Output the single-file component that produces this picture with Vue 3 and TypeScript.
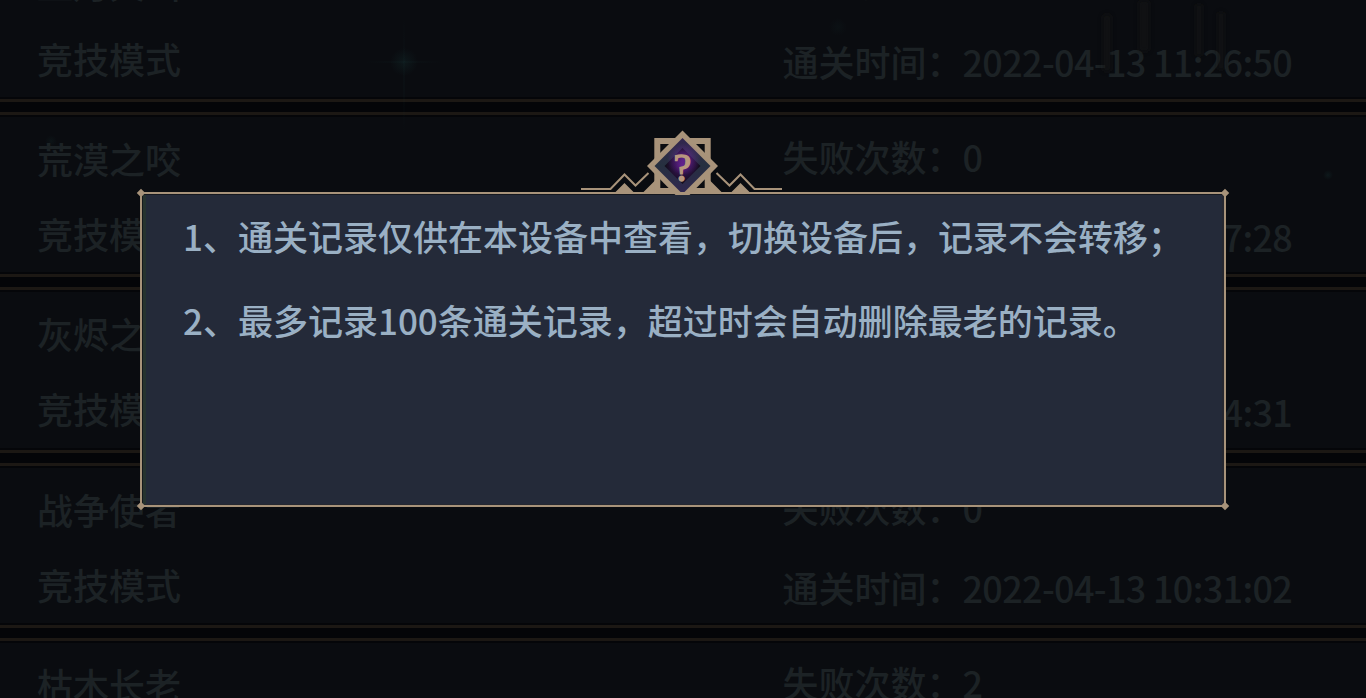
<script setup lang="ts">
interface RecordItem {
  name: string
  mode: string
  fails: number
  time: string
}

const records: RecordItem[] = [
  { name: '血月火山', mode: '竞技模式', fails: 0, time: '2022-04-13 11:26:50' },
  { name: '荒漠之咬', mode: '竞技模式', fails: 0, time: '2022-04-13 11:07:28' },
  { name: '灰烬之地', mode: '竞技模式', fails: 0, time: '2022-04-13 10:44:31' },
  { name: '战争使者', mode: '竞技模式', fails: 0, time: '2022-04-13 10:31:02' },
  { name: '枯木长老', mode: '竞技模式', fails: 2, time: '2022-04-13 10:12:45' },
]

const tips: string[] = [
  '1、通关记录仅供在本设备中查看，切换设备后，记录不会转移；',
  '2、最多记录100条通关记录，超过时会自动删除最老的记录。',
]

const corners = ['tl', 'tr', 'bl', 'br']
</script>

<template>
  <div class="screen">
    <ul class="records">
      <li v-for="item in records" :key="item.time" class="record">
        <div class="col-left">
          <span class="name">{{ item.name }}</span>
          <span class="mode">{{ item.mode }}</span>
        </div>
        <div class="col-right">
          <span class="fails">失败次数：{{ item.fails }}</span>
          <span class="time">通关时间：<span class="stamp">{{ item.time }}</span></span>
        </div>
      </li>
    </ul>

    <svg class="glow" viewBox="0 0 1366 698">
      <defs>
        <radialGradient id="spark">
          <stop offset="0" stop-color="#1c4a48" stop-opacity=".2" />
          <stop offset="1" stop-color="#1c4a48" stop-opacity="0" />
        </radialGradient>
        <filter id="soft"><feGaussianBlur stdDeviation="2" /></filter>
      </defs>
      <circle cx="404" cy="62" r="14" fill="url(#spark)" />
      <ellipse cx="404" cy="62" rx="46" ry="1" fill="url(#spark)" opacity=".6" />
      <ellipse cx="404" cy="75" rx="1" ry="70" fill="url(#spark)" opacity=".6" />
      <circle cx="51" cy="141" r="6" fill="url(#spark)" opacity=".6" />
      <circle cx="838" cy="27" r="9" fill="url(#spark)" opacity=".4" />
      <circle cx="1328" cy="175" r="5" fill="url(#spark)" />
      <g fill="#191812" opacity=".5" filter="url(#soft)">
        <rect x="1102" y="14" width="10" height="58" rx="5" />
        <rect x="1138" y="0" width="12" height="52" rx="5" />
        <rect x="1195" y="4" width="8" height="52" rx="4" />
        <rect x="1217" y="12" width="8" height="58" rx="4" />
      </g>
    </svg>

    <section class="dialog">
      <p v-for="tip in tips" :key="tip" class="tip">{{ tip }}</p>
      <i v-for="c in corners" :key="c" class="corner" :class="c"></i>

      <svg class="crest" width="203" height="68" viewBox="581 129 203 68">
        <defs>
          <linearGradient id="gem" x1="0" y1="0" x2="0" y2="1">
            <stop offset="0" stop-color="#33264f" />
            <stop offset=".5" stop-color="#26303f" />
            <stop offset="1" stop-color="#302750" />
          </linearGradient>
          <radialGradient id="core">
            <stop offset="0" stop-color="#5a1c80" />
            <stop offset=".4" stop-color="#2f1248" />
            <stop offset="1" stop-color="#100d18" />
          </radialGradient>
          <radialGradient id="aura">
            <stop offset="0" stop-color="#7a2bb0" stop-opacity=".65" />
            <stop offset="1" stop-color="#7a2bb0" stop-opacity="0" />
          </radialGradient>
        </defs>
        <g fill="none" stroke="#a8937a" stroke-width="2">
          <path d="M581 189H610.500L624.500 174.500L635.500 185.500L648.500 173" />
          <path d="M782 189H754.500L740.500 174.500L729.500 185.500L716.500 173" />
        </g>
        <path
          d="M614.500 193L624.500 183L634.500 193ZM750.500 193L740.500 183L730.500 193ZM642.500 193L656 179.500V193ZM722.500 193L709 179.500V193Z"
          fill="#a8937a"
        />
        <rect x="657.300" y="141" width="50.400" height="50" fill="#0b0c10" stroke="#a8937a" stroke-width="6" />
        <path d="M682.500 130.500L718 166L689.500 195H675.500L647 166Z" fill="#a8937a" />
        <path d="M682.500 138L710.500 166L684.500 192H680.500L654.500 166Z" fill="url(#gem)" />
        <path d="M682.500 148L700.500 166L682.500 184L664.500 166Z" fill="url(#core)" />
        <ellipse cx="684" cy="159" rx="17" ry="16" fill="url(#aura)" />
        <text x="682.500" y="180.500" class="mark">?</text>
      </svg>
    </section>
  </div>
</template>

<style>
body {
  margin: 0;
  background: #040406;
}
</style>

<style scoped>
.screen {
  position: relative;
  width: 1366px;
  height: 698px;
  overflow: hidden;
  background: #040508;
  font-family: "Noto Sans CJK SC", sans-serif;
}
.records {
  display: flex;
  flex-direction: column;
  gap: 10px;
  margin: -63.400px 0 0;
  padding: 0;
  list-style: none;
}
.record {
  box-sizing: border-box;
  flex: none;
  display: flex;
  height: 165.400px;
  border: solid #1c1814;
  border-width: 3px 0;
  background: #0a0c10;
  box-shadow: inset 0 2px #050609, inset 0 -2px #050609;
  color: #1c2225;
  font-size: 36px;
  font-weight: 500;
  line-height: 52px;
  white-space: nowrap;
}
.col-left, .col-right {
  display: flex;
  flex-direction: column;
}
.col-left {
  width: 746px;
  padding: 17px 0 0 37px;
  gap: 23px;
  box-sizing: border-box;
  width: 782.500px;
}
.col-right {
  padding: 15px 0 0;
  gap: 28px;
}
.stamp { letter-spacing: -0.680px; }
.glow {
  position: absolute;
  inset: 0;
  pointer-events: none;
}

.dialog {
  position: absolute;
  left: 140px;
  top: 192px;
  box-sizing: border-box;
  width: 1086px;
  height: 314.500px;
  padding: 16px 40px 0 41px;
  border: 2px solid #a8937a;
  background: #242a39;
  box-shadow: inset 1px 0 #15191c, inset 0 1px #15181f, inset -2px -1px #262830, inset 4px 0 #26332f;
}
.tip {
  margin: 0 0 32px;
  color: #9ab0c4;
  font-size: 35px;
  font-weight: 500;
  line-height: 52px;
  white-space: nowrap;
}
.corner {
  position: absolute;
  width: 6px;
  height: 6px;
  background: #a8937a;
  transform: rotate(45deg);
}
.corner.tl { left: -4px; top: -4px; }
.corner.tr { right: -4px; top: -4px; }
.corner.bl { left: -4px; bottom: -4px; }
.corner.br { right: -4px; bottom: -4px; }
.crest {
  position: absolute;
  left: 439px;
  top: -65px;
}
.mark {
  fill: #b8977f;
  stroke: #b8977f;
  stroke-width: 1.5px;
  font: 40px "Liberation Serif", serif;
  text-anchor: middle;
}
</style>
